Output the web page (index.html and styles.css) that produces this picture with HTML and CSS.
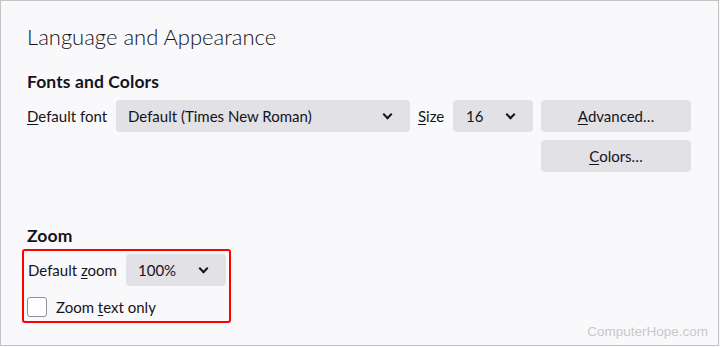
FILE: index.html
```html
<!DOCTYPE html>
<html>
<head>
<meta charset="utf-8">
<link rel="stylesheet" href="styles.css">
</head>
<body>
<div class="page">
  <h1 class="title">Language and Appearance</h1>
  <h2 class="section">Fonts and Colors</h2>
  <div class="fonts-grid">
    <span class="label"><u>D</u>efault font</span>
    <div class="select select-font"><span>Default (Times New Roman)</span><span class="chev"></span></div>
    <span class="label"><u>S</u>ize</span>
    <div class="select select-size"><span>16</span><span class="chev"></span></div>
    <div class="button"><u>A</u>dvanced…</div>
    <div class="button button-colors"><u>C</u>olors…</div>
  </div>
  <h2 class="section section-zoom">Zoom</h2>
  <div class="zoom-box">
    <div class="zoom-row">
      <span class="label label-zoom">Default <u>z</u>oom</span>
      <div class="select select-zoom"><span>100%</span><span class="chev"></span></div>
    </div>
    <label class="check-row">
      <span class="checkbox"></span>
      <span>Zoom <u>t</u>ext only</span>
    </label>
  </div>
  <div class="watermark">ComputerHope.com</div>
</div>
</body>
</html>
```

FILE: styles.css
```css
html, body {
  margin: 0;
  padding: 0;
  background: #f9f9fb;
}

.page {
  position: relative;
  box-sizing: border-box;
  width: 719px;
  height: 346px;
  border: 1px solid #c4c4c4;
  background: #f9f9fb;
  padding: 0 0 0 26px;
  font-family: "Segoe UI", Lato, "Noto Sans", sans-serif;
  font-size: 15px;
  color: #15141a;
}

.title {
  margin: 21px 0 0 0;
  font-size: 22px;
  line-height: 30px;
  font-weight: 300;
}

.section {
  margin: 20px 0 0 0;
  font-size: 17.5px;
  line-height: 20px;
  font-weight: 700;
  letter-spacing: 0.1px;
}

.fonts-grid {
  margin-top: 8px;
  display: grid;
  grid-template-columns: 81px 294px 27px 80px 150px;
  grid-auto-rows: 32px;
  column-gap: 8px;
  row-gap: 8px;
  align-items: center;
}

.label {
  white-space: nowrap;
}

u {
  text-decoration-thickness: 1px;
  text-underline-offset: 2px;
}

.select {
  box-sizing: border-box;
  height: 32px;
  background: #e1e1e6;
  border-radius: 4px;
  display: flex;
  align-items: center;
  justify-content: space-between;
  padding: 0 19px 0 12px;
  white-space: nowrap;
}

.select-size {
  padding-left: 13px;
}

.chev {
  width: 5px;
  height: 5px;
  border-right: 2px solid #15141a;
  border-bottom: 2px solid #15141a;
  transform: translateY(-2px) rotate(45deg);
}

.button {
  box-sizing: border-box;
  height: 32px;
  background: #e1e1e6;
  border-radius: 4px;
  display: flex;
  align-items: center;
  justify-content: center;
}

.button-colors {
  grid-column: 5;
}

.section-zoom {
  margin-top: 54px;
}

.zoom-box {
  box-sizing: border-box;
  width: 209px;
  margin: 3px 0 0 -5px;
  border: 2px solid #ff0000;
  border-radius: 3px;
  padding: 3px 3px 4px 4px;
}

.zoom-row {
  display: flex;
  align-items: center;
  gap: 8px;
}

.label-zoom {
  width: 90px;
}

.select-zoom {
  width: 100px;
}

.check-row {
  margin: 11px 0 0 -1px;
  display: flex;
  align-items: center;
  gap: 9px;
  height: 20px;
}

.checkbox {
  box-sizing: border-box;
  width: 20px;
  height: 20px;
  background: #ffffff;
  border: 1px solid #8f8f9d;
  border-radius: 3px;
}

.watermark {
  position: absolute;
  right: 10px;
  bottom: 6px;
  font-family: "Liberation Sans", Arial, sans-serif;
  font-size: 13.5px;
  color: #c8c8c8;
}
```
